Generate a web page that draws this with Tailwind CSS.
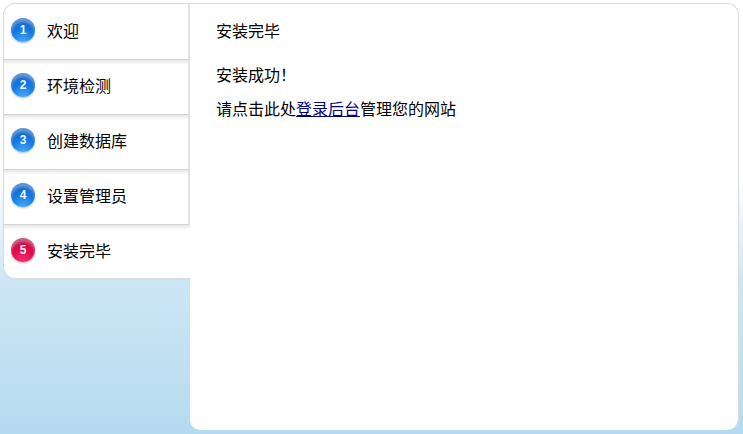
<!DOCTYPE html>
<html lang="zh">
<head>
<meta charset="utf-8">
<script src="https://cdn.jsdelivr.net/npm/@tailwindcss/browser@4"></script>
</head>
<body class="m-0 h-[434px] w-[743px] overflow-hidden bg-linear-to-b from-white from-[40%] via-[#cde6f5] via-[65%] to-[#b5dbf0] font-['Noto_Sans_CJK_SC','Liberation_Sans',sans-serif] text-black">
<div class="flex items-start pl-[3px] pt-[3px]">
  <ul class="w-[187px] rounded-bl-[12px] rounded-tl-[12px] border-l border-t border-[#d4dade] bg-white text-[16px] shadow-[0_2px_1px_#d4dde2]">
    <li class="flex h-[56px] items-center gap-[12px] rounded-tl-[12px] border-b border-r-2 border-b-[#d4d4d4] border-r-[#e2e2e2] pb-[4px] pl-[7px]">
      <span class="flex size-[24px] items-center justify-center rounded-full bg-[radial-gradient(circle_at_50%_100%,#45aaf8_0%,#1576e0_50%,#0a58b4_100%)] text-[12px] font-bold leading-none text-[#eef5ff] shadow-[inset_0_4px_3px_rgba(255,255,255,0.35),0_1px_2px_rgba(80,130,190,0.5)] font-['Liberation_Sans']">1</span>
      <span class="leading-none">欢迎</span>
    </li>
    <li class="flex h-[55px] items-center gap-[12px] border-b border-r-2 border-b-[#d4d4d4] border-r-[#e2e2e2] bg-linear-to-b from-[#e6e6e6] to-white to-[5px] pb-[4px] pl-[7px]">
      <span class="flex size-[24px] items-center justify-center rounded-full bg-[radial-gradient(circle_at_50%_100%,#45aaf8_0%,#1576e0_50%,#0a58b4_100%)] text-[12px] font-bold leading-none text-[#eef5ff] shadow-[inset_0_4px_3px_rgba(255,255,255,0.35),0_1px_2px_rgba(80,130,190,0.5)] font-['Liberation_Sans']">2</span>
      <span class="leading-none">环境检测</span>
    </li>
    <li class="flex h-[55px] items-center gap-[12px] border-b border-r-2 border-b-[#d4d4d4] border-r-[#e2e2e2] bg-linear-to-b from-[#e6e6e6] to-white to-[5px] pb-[4px] pl-[7px]">
      <span class="flex size-[24px] items-center justify-center rounded-full bg-[radial-gradient(circle_at_50%_100%,#45aaf8_0%,#1576e0_50%,#0a58b4_100%)] text-[12px] font-bold leading-none text-[#eef5ff] shadow-[inset_0_4px_3px_rgba(255,255,255,0.35),0_1px_2px_rgba(80,130,190,0.5)] font-['Liberation_Sans']">3</span>
      <span class="leading-none">创建数据库</span>
    </li>
    <li class="flex h-[55px] items-center gap-[12px] border-b border-r-2 border-b-[#d4d4d4] border-r-[#e2e2e2] bg-linear-to-b from-[#e6e6e6] to-white to-[5px] pb-[4px] pl-[7px]">
      <span class="flex size-[24px] items-center justify-center rounded-full bg-[radial-gradient(circle_at_50%_100%,#45aaf8_0%,#1576e0_50%,#0a58b4_100%)] text-[12px] font-bold leading-none text-[#eef5ff] shadow-[inset_0_4px_3px_rgba(255,255,255,0.35),0_1px_2px_rgba(80,130,190,0.5)] font-['Liberation_Sans']">4</span>
      <span class="leading-none">设置管理员</span>
    </li>
    <li class="flex h-[53px] items-center gap-[12px] rounded-bl-[12px] bg-linear-to-b from-[#e6e6e6] to-white to-[5px] pb-[3px] pl-[7px]">
      <span class="flex size-[24px] items-center justify-center rounded-full bg-[radial-gradient(circle_at_50%_100%,#f5306f_0%,#e0084e_50%,#a80638_100%)] text-[12px] font-bold leading-none text-[#ffeef3] shadow-[inset_0_4px_3px_rgba(255,255,255,0.35),0_1px_2px_rgba(190,80,110,0.5)] font-['Liberation_Sans']">5</span>
      <span class="leading-none">安装完毕</span>
    </li>
  </ul>
  <main class="h-[427px] w-[549px] rounded-bl-[10px] rounded-br-[12px] rounded-tr-[12px] border-r border-t border-[#d8dcdf] bg-white pl-[26px] text-[16px] leading-none">
    <h1 class="pt-[18px] text-[16px] font-normal">安装完毕</h1>
    <p class="pt-[28px]">安装成功！</p>
    <p class="pt-[18px]">请点击此处<a href="#" class="text-[#000080] underline">登录后台</a>管理您的网站</p>
  </main>
</div>
</body>
</html>
